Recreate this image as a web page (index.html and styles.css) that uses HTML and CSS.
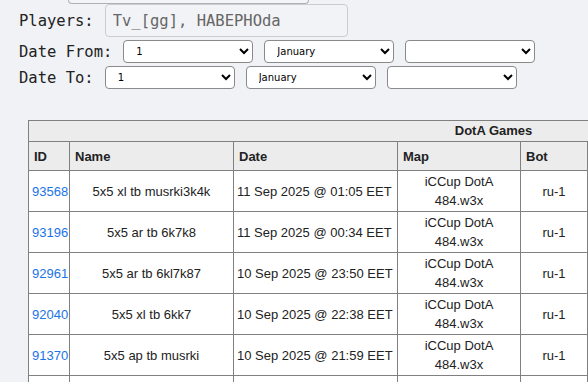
FILE: index.html
```html
<!DOCTYPE html>
<html lang="en">
<head>
    <meta charset="UTF-8">
    <meta name="viewport" content="width=device-width, initial-scale=1.0">
    <title>DotA Games</title>
    <link rel="stylesheet" href="styles.css">
</head>
<body>
    <div class="filters">
        <!-- bottom edge of the field above the fold -->
        <div class="field-stub"></div>
        <div class="filter-row players">
            <label class="filter-label">Players:</label>
            <input class="text-field" type="text" value="Tv_[gg], HABEPHOda">
        </div>
        <div class="filter-row">
            <label class="filter-label">Date From:</label>
            <select class="date-select"><option>1</option></select>
            <select class="date-select"><option>January</option></select>
            <select class="date-select"><option></option></select>
        </div>
        <div class="filter-row">
            <label class="filter-label">Date To:</label>
            <select class="date-select"><option>1</option></select>
            <select class="date-select"><option>January</option></select>
            <select class="date-select"><option></option></select>
        </div>
    </div>

    <table class="games">
        <colgroup>
            <col style="width: 41px">
            <col style="width: 164px">
            <col style="width: 164px">
            <col style="width: 123px">
            <col style="width: 67px">
            <col style="width: 180px">
            <col style="width: 191px">
        </colgroup>
        <thead>
            <tr><th colspan="7" class="caption">DotA Games</th></tr>
            <tr>
                <th>ID</th>
                <th>Name</th>
                <th>Date</th>
                <th>Map</th>
                <th>Bot</th>
                <th>Duration</th>
                <th>Winner</th>
            </tr>
        </thead>
        <tbody>
            <tr>
                <td><a href="#">93568</a></td>
                <td class="center">5x5 xl tb musrki3k4k</td>
                <td>11 Sep 2025 @ 01:05 EET</td>
                <td class="center">iCCup DotA 484.w3x</td>
                <td class="center">ru-1</td>
                <td class="center">42:17</td>
                <td class="center">Sentinel</td>
            </tr>
            <tr>
                <td><a href="#">93196</a></td>
                <td class="center">5x5 ar tb 6k7k8</td>
                <td>11 Sep 2025 @ 00:34 EET</td>
                <td class="center">iCCup DotA 484.w3x</td>
                <td class="center">ru-1</td>
                <td class="center">28:40</td>
                <td class="center">Scourge</td>
            </tr>
            <tr>
                <td><a href="#">92961</a></td>
                <td class="center">5x5 ar tb 6kl7k87</td>
                <td>10 Sep 2025 @ 23:50 EET</td>
                <td class="center">iCCup DotA 484.w3x</td>
                <td class="center">ru-1</td>
                <td class="center">37:02</td>
                <td class="center">Sentinel</td>
            </tr>
            <tr>
                <td><a href="#">92040</a></td>
                <td class="center">5x5 xl tb 6kk7</td>
                <td>10 Sep 2025 @ 22:38 EET</td>
                <td class="center">iCCup DotA 484.w3x</td>
                <td class="center">ru-1</td>
                <td class="center">51:33</td>
                <td class="center">Scourge</td>
            </tr>
            <tr>
                <td><a href="#">91370</a></td>
                <td class="center">5x5 ap tb musrki</td>
                <td>10 Sep 2025 @ 21:59 EET</td>
                <td class="center">iCCup DotA 484.w3x</td>
                <td class="center">ru-1</td>
                <td class="center">33:48</td>
                <td class="center">Sentinel</td>
            </tr>
            <tr>
                <td><a href="#">90814</a></td>
                <td class="center">5x5 ar tb 6k7k</td>
                <td>10 Sep 2025 @ 21:12 EET</td>
                <td class="center">iCCup DotA 484.w3x</td>
                <td class="center">ru-1</td>
                <td class="center">40:05</td>
                <td class="center">Scourge</td>
            </tr>
        </tbody>
    </table>
</body>
</html>
```

FILE: styles.css
```css
body {
    margin: 0;
    background-color: #f0f2f6;
    color: #222;
    overflow: hidden;
}
.filters {
    padding-left: 19px;
    display: flex;
    flex-direction: column;
    gap: 3px;
}
.field-stub {
    box-sizing: border-box;
    flex: 0 0 4px;
    align-self: flex-start;
    width: 241px;
    margin-left: 49px;
    border: 1px solid #aeb2b8;
    border-top: none;
    border-radius: 0 0 4px 4px;
    background: #f3f4f7;
}
.filter-row {
    display: flex;
    align-items: center;
    gap: 11px;
}
.filter-row.players {
    margin-top: -3px;
}
.filter-label {
    font-family: "DejaVu Sans Mono", monospace;
    font-size: 15.5px;
    color: #222;
}
.text-field {
    box-sizing: border-box;
    flex-shrink: 0;
    width: 243px;
    height: 33px;
    margin: 0;
    padding: 0 7px;
    border: 1px solid #c9ccd1;
    border-radius: 4px;
    background: #f2f3f6;
    font-family: "DejaVu Sans Mono", monospace;
    font-size: 15.5px;
    color: #666;
}
.date-select {
    box-sizing: border-box;
    width: 130px;
    height: 23px;
    margin: 0;
    padding: 0 0 0 8px;
    border: 1px solid #8a8a8a;
    border-radius: 4px;
    background: #fff;
    font-family: "DejaVu Sans", sans-serif;
    font-size: 10px;
    color: #000;
}
.games {
    margin: 31px 0 0 28px;
    width: 930px;
    table-layout: fixed;
    border-collapse: collapse;
    font-family: "Liberation Sans", Arial, sans-serif;
    font-size: 13px;
    line-height: 19px;
    color: #222;
    background: #fff;
}
.games th,
.games td {
    border: 1px solid #808080;
}
.games th {
    background: #ececec;
    text-align: left;
    font-weight: bold;
    padding: 5px 5px 4px;
}
.games th.caption {
    text-align: center;
    padding: 0 5px 1px;
}
.games td {
    padding: 1px 3px;
    vertical-align: middle;
}
.games td.center {
    text-align: center;
}
.games a {
    color: #1a73e8;
    text-decoration: none;
}
```
